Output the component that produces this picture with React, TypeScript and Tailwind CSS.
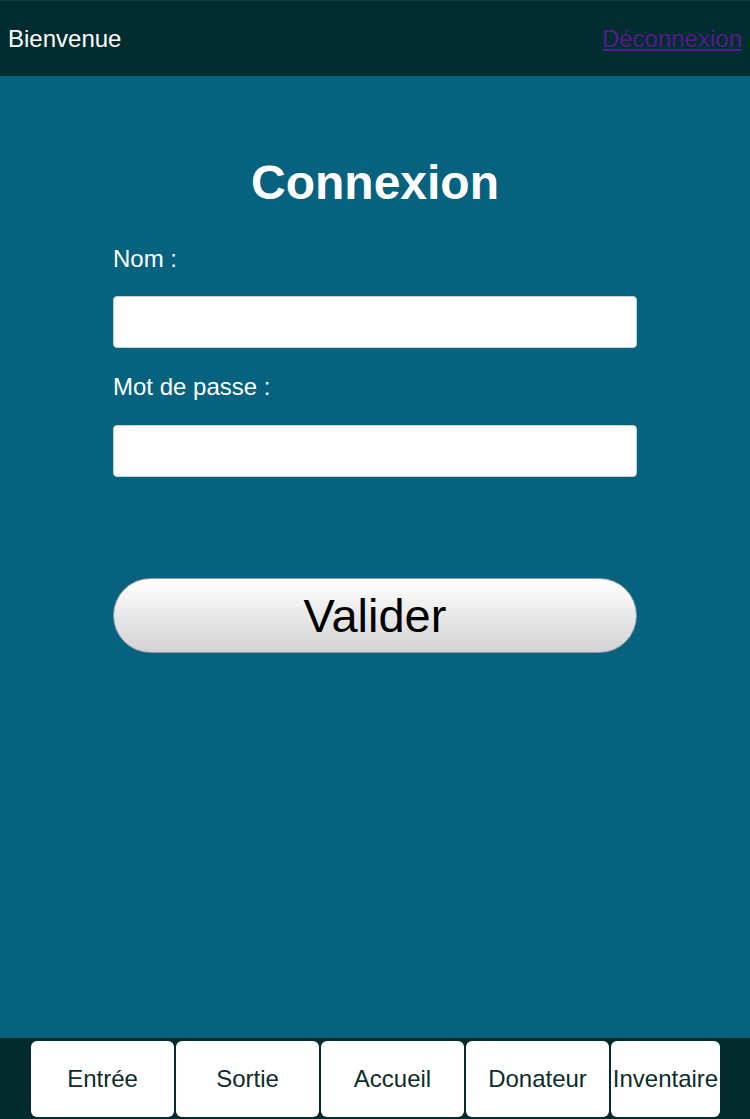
import React from 'react';

const TABS = [
  { label: 'Entrée', w: 'w-[143px]' },
  { label: 'Sortie', w: 'w-[143px]' },
  { label: 'Accueil', w: 'w-[143px]' },
  { label: 'Donateur', w: 'w-[143px]' },
  { label: 'Inventaire', w: 'w-[109px]' },
];

export default function App() {
  return (
    <div className="flex h-[1119px] flex-col bg-[#06627f] font-['Liberation_Sans',Arial,sans-serif]">
      {/* Header */}
      <header className="flex h-[76px] items-center justify-between border-t border-[#0b3a3d] bg-[#022d30] px-2">
        <span className="text-[24px] leading-none text-white">Bienvenue</span>
        <a href="#" className="text-[24px] leading-none text-[#551a8b] underline">
          Déconnexion
        </a>
      </header>

      {/* Form */}
      <main className="flex-1">
        <div className="mx-auto w-[524px] pt-[79px]">
          <h1 className="text-center text-[48px] font-bold leading-[56px] text-white">Connexion</h1>

          <label className="mt-[34px] block text-[24px] leading-[28px] text-white">Nom :</label>
          <input
            type="text"
            className="mt-[23px] block h-[52px] w-full rounded-[4px] border border-[#c9d3d6] bg-white px-2 text-[22px] outline-none"
          />

          <label className="mt-[25px] block text-[24px] leading-[28px] text-white">Mot de passe :</label>
          <input
            type="password"
            className="mt-[24px] block h-[52px] w-full rounded-[4px] border border-[#c9d3d6] bg-white px-2 text-[22px] outline-none"
          />

          <button className="mt-[101px] block h-[75px] w-full rounded-full border border-[#8e9a9e] bg-gradient-to-b from-[#ffffff] to-[#d3d3d3] text-[47px] leading-none text-black">
            Valider
          </button>
        </div>
      </main>

      {/* Bottom nav */}
      <nav className="flex h-[81px] items-center gap-[2px] bg-[#032a2c] pl-[31px]">
        {TABS.map(t => (
          <button
            key={t.label}
            className={`${t.w} flex h-[76px] items-center justify-center rounded-[6px] bg-white text-[24px] leading-none text-[#0d2c2c]`}
          >
            {t.label}
          </button>
        ))}
      </nav>
    </div>
  );
}
